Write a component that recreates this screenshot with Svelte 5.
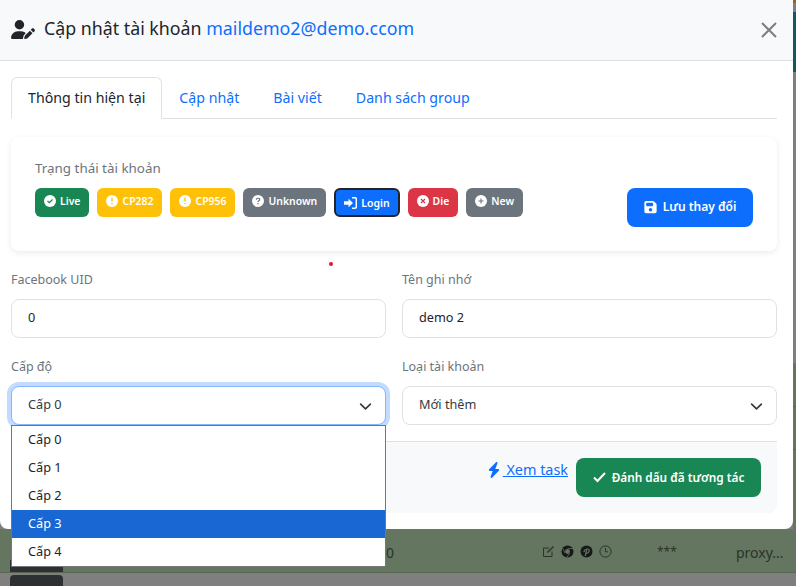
<script>
  const statuses = [
    { label: 'Live', tone: 'green', icon: 'check' },
    { label: 'CP282', tone: 'amber', icon: 'bang' },
    { label: 'CP956', tone: 'amber', icon: 'bang' },
    { label: 'Unknown', tone: 'gray', icon: 'help' },
    { label: 'Login', tone: 'blue', icon: 'login' },
    { label: 'Die', tone: 'red', icon: 'cross' },
    { label: 'New', tone: 'gray', icon: 'plus' }
  ];
  const levels = ['Cấp 0', 'Cấp 1', 'Cấp 2', 'Cấp 3', 'Cấp 4'];
  const tabs = ['Cập nhật', 'Bài viết', 'Danh sách group'];
</script>

<div class="page">
  <div class="edge gold"></div>
  <div class="edge teal"></div>
  <div class="edge green"></div>
  <div class="backdrop-row">
    <span class="cell-num">0</span>
    <span class="row-icons">
      <svg width="13" height="13" viewBox="0 0 13 13" fill="none" stroke="#2b332b" stroke-width="1"><path d="M10 6.500V11.500H1.500V3H7" /><path d="M5.500 7.500L11.500 1.500" stroke-width="1.400" /></svg>
      <svg width="13" height="13" viewBox="0 0 13 13"><circle cx="6.500" cy="6.500" r="6" fill="#15191a" /><circle cx="6.500" cy="6.500" r="2.400" fill="#64765f" /><path d="M6.500 3.600H12M4 8L1.500 3M8.600 8.200L5.800 12.400" stroke="#64765f" stroke-width=".8" /></svg>
      <svg width="13" height="13" viewBox="0 0 13 13"><circle cx="6.500" cy="6.500" r="6" fill="#15191a" /><path d="M5.200 11L6.600 5M4.200 7C3.400 4.500 8.800 2.600 9.200 5.400C9.400 7.600 7 8.800 5.900 7.600" fill="none" stroke="#64765f" stroke-width="1.200" /></svg>
      <svg width="13" height="13" viewBox="0 0 13 13" fill="none" stroke="#2b332b" stroke-width="1"><circle cx="6.500" cy="6.500" r="5.600" /><path d="M6.500 3V6.800H9" /></svg>
    </span>
    <span class="cell-stars">***</span>
    <span class="cell-proxy">proxy...</span>
  </div>
  <div class="backdrop-btn top"></div>
  <div class="backdrop-btn bottom"></div>

  <div class="modal">
    <header class="modal-head">
      <h1>
        <svg class="user-icon" width="24" height="19" viewBox="0 0 640 512" fill="#212529"><path d="M224 256A128 128 0 1 0 224 0a128 128 0 1 0 0 256zm-45.700 48C79.800 304 0 383.800 0 482.300C0 498.700 13.300 512 29.700 512H322.800c-3.100-8.800-3.700-18.400-1.400-27.800l15-60.100c2.800-11.300 8.600-21.500 16.800-29.700l40.300-40.300c-32.100-31-75.700-50.100-123.900-50.100H178.300zm435.500-68.300c-15.600-15.600-40.900-15.600-56.600 0l-29.400 29.400 71 71 29.400-29.400c15.600-15.600 15.600-40.900 0-56.600l-14.400-14.400zM375.900 417c-4.100 4.100-7 9.200-8.400 14.900l-15 60.100c-1.400 5.500 .2 11.200 4.200 15.200s9.700 5.600 15.200 4.200l60.100-15c5.600-1.400 10.800-4.300 14.900-8.400L576.100 358.700l-71-71L375.900 417z" /></svg>
        <span class="title-text">Cập nhật tài khoản <span class="email">maildemo2@demo.ccom</span></span>
      </h1>
      <svg class="close" width="16" height="16" viewBox="0 0 16 16" stroke="#7b7e80" stroke-width="2" fill="none"><path d="M1 1L15 15M15 1L1 15" /></svg>
    </header>

    <div class="modal-body">
      <nav class="tabs">
        <span class="tab active">Thông tin hiện tại</span>
        {#each tabs as tab}
          <span class="tab">{tab}</span>
        {/each}
      </nav>

      <section class="status-card">
        <div class="status-title">Trạng thái tài khoản</div>
        <div class="badges">
          {#each statuses as s}
            <span class="badge {s.tone}">
              {#if s.icon === 'login'}
                <svg width="13" height="12" viewBox="0 0 13 12" fill="#fff"><path d="M0 4.300H4.500V1.800L9 6L4.500 10.200V7.700H0Z" /><path d="M8 .8H11C11.800 .8 12.300 1.300 12.300 2V10C12.300 10.700 11.800 11.200 11 11.200H8" fill="none" stroke="#fff" stroke-width="1.500" /></svg>
              {:else}
                <svg class="raise" width="12" height="12" viewBox="0 0 12 12">
                  <circle cx="6" cy="6" r="6" fill="#fff" />
                  {#if s.icon === 'check'}
                    <path d="M3.500 6L5.300 7.700L8.500 4.500" fill="none" stroke="#198754" stroke-width="1.200" />
                  {:else if s.icon === 'bang'}
                    <path d="M6 2.800V6.700M6 8V9.300" stroke="#ffc107" stroke-width="1.300" />
                  {:else if s.icon === 'help'}
                    <path d="M4.300 4.700C4.400 2.700 7.800 2.800 7.700 4.600C7.600 5.800 6 5.700 6 7M6 8V9.300" fill="none" stroke="#6c757d" stroke-width="1.200" />
                  {:else if s.icon === 'cross'}
                    <path d="M4 4L8 8M8 4L4 8" stroke="#dc3545" stroke-width="1.200" />
                  {:else}
                    <path d="M3.500 6H8.500M6 3.500V8.500" stroke="#6c757d" stroke-width="1.100" />
                  {/if}
                </svg>
              {/if}
              <span class:raise={s.icon !== 'login'}>{s.label}</span>
            </span>
          {/each}
        </div>
        <button class="save" type="button">
          <svg width="13" height="14" viewBox="0 0 448 512" fill="#fff"><path d="M64 32C28.700 32 0 60.700 0 96V416c0 35.300 28.700 64 64 64H384c35.300 0 64-28.700 64-64V173.300c0-17-6.700-33.300-18.700-45.300L352 50.700C340 38.700 323.700 32 306.700 32H64zm0 96c0-17.700 14.300-32 32-32H288c17.700 0 32 14.300 32 32v64c0 17.700-14.300 32-32 32H96c-17.700 0-32-14.300-32-32V128zM224 288a64 64 0 1 1 0 128 64 64 0 1 1 0-128z" /></svg>
          Lưu thay đổi
        </button>
      </section>

      <div class="dot"></div>

      <div class="form-grid">
        <div class="field">
          <label for="uid">Facebook UID</label>
          <input id="uid" value="0" />
        </div>
        <div class="field">
          <label for="memo">Tên ghi nhớ</label>
          <input id="memo" value="demo 2" />
        </div>
        <div class="field">
          <span class="label">Cấp độ</span>
          <div class="select focus">
            Cấp 0
            <svg width="13" height="13" viewBox="0 0 16 16" fill="none" stroke="#343a40" stroke-width="2" stroke-linecap="round" stroke-linejoin="round"><path d="M2 5L8 11L14 5" /></svg>
          </div>
          <ul class="options">
            {#each levels as level, i}
              <li class:picked={i === 3}>{level}</li>
            {/each}
          </ul>
        </div>
        <div class="field">
          <span class="label">Loại tài khoản</span>
          <div class="select">
            Mới thêm
            <svg width="13" height="13" viewBox="0 0 16 16" fill="none" stroke="#343a40" stroke-width="2" stroke-linecap="round" stroke-linejoin="round"><path d="M2 5L8 11L14 5" /></svg>
          </div>
        </div>
      </div>

      <footer class="actions">
        <a class="task-link" href="#task">
          <svg width="12" height="16" viewBox="0 0 448 512" fill="#0d6efd" preserveAspectRatio="none"><path d="M349.400 44.600c5.900-13.700 1.500-29.700-10.600-38.500s-28.600-8-39.900 1.800l-256 224c-10 8.800-13.600 22.900-8.900 35.300S50.700 288 64 288H175.500L98.600 467.400c-5.900 13.700-1.500 29.700 10.600 38.500s28.600 8 39.900-1.800l256-224c10-8.800 13.600-22.900 8.900-35.300s-16.600-20.700-30-20.700H272.500L349.400 44.600z" /></svg>
          <span>&nbsp;Xem task</span>
        </a>
        <button class="mark" type="button">
          <svg width="13" height="12" viewBox="0 0 13 12" fill="none" stroke="#fff" stroke-width="2"><path d="M1 6.500L4.500 10L12 2" /></svg>
          Đánh dấu đã tương tác
        </button>
      </footer>
    </div>
  </div>
</div>

<style>
  :global(body) {
    margin: 0;
    background: #7f7f7f;
  }

  .page {
    position: relative;
    width: 796px;
    height: 586px;
    overflow: hidden;
    background: #7f7f7f;
    font-family: "Noto Sans", sans-serif;
    color: #212529;
  }

  .edge {
    position: absolute;
    left: 793px;
    width: 3px;
  }

  .edge.gold {
    top: 0;
    height: 3px;
    background: #8a6d1c;
  }

  .edge.teal {
    top: 12px;
    height: 60px;
    background: #0f5a5f;
  }

  .edge.green {
    top: 363px;
    height: 166px;
    background: #64765f;
    border-top: 1px solid #6d7a69;
    box-shadow: inset 0 42px 0 #64765f, inset 0 43px 0 #566651, inset 0 85px 0 #64765f, inset 0 86px 0 #566651;
  }

  .backdrop-row {
    position: absolute;
    left: 0;
    right: 0;
    top: 529px;
    height: 44px;
    box-sizing: border-box;
    background: #64765f;
    border-bottom: 1px solid #566651;
    font-size: 14px;
    color: #2b332b;
  }

  .cell-num {
    position: absolute;
    left: 386px;
    top: 14px;
  }

  .row-icons {
    position: absolute;
    left: 542px;
    top: 16px;
    display: flex;
    gap: 6px;
  }

  .cell-stars {
    position: absolute;
    left: 657px;
    top: 14px;
    font-size: 12px;
  }

  .cell-proxy {
    position: absolute;
    left: 736px;
    top: 14px;
  }

  .backdrop-btn {
    position: absolute;
    left: 10px;
    width: 53px;
    background: #2d3033;
  }

  .backdrop-btn.top {
    top: 560px;
    height: 12px;
  }

  .backdrop-btn.bottom {
    top: 575px;
    height: 11px;
    border-radius: 4px 4px 0 0;
  }

  .modal {
    position: absolute;
    left: 0;
    top: 0;
    width: 793px;
    height: 529px;
    background: #fff;
    border-radius: 0 0 8px 8px;
  }

  .modal-head {
    display: flex;
    align-items: center;
    justify-content: space-between;
    height: 60px;
    padding: 0 16px 0 11px;
    background: #f8f9fa;
    border-bottom: 1px solid #dee2e6;
  }

  h1 {
    display: flex;
    align-items: center;
    gap: 9px;
    margin: 0;
    font-size: 17.800px;
    font-weight: 400;
  }

  .user-icon {
    margin-top: -2px;
  }

  .title-text {
    margin-bottom: 4px;
  }

  .email {
    color: #0d6efd;
  }

  .modal-body {
    padding: 16px 16px 0 11px;
  }

  .tabs {
    display: flex;
    height: 42px;
    box-sizing: border-box;
    border-bottom: 1px solid #dee2e6;
    font-size: 14.200px;
  }

  .tab {
    height: 42px;
    box-sizing: border-box;
    padding: 0 16px;
    line-height: 40px;
    color: #0d6efd;
    border: 1px solid transparent;
  }

  .tab.active {
    color: #212529;
    background: #fff;
    border-color: #dee2e6 #dee2e6 #fff;
    border-radius: 6px 6px 0 0;
  }

  .status-card {
    display: grid;
    grid-template-columns: 1fr 126px;
    align-content: start;
    height: 114px;
    box-sizing: border-box;
    margin-top: 18px;
    padding: 22px 24px 0;
    border-radius: 8px;
    background: #fff;
    box-shadow: 0 2px 6px rgba(0, 0, 0, .08);
  }

  .status-title {
    grid-column: 1 / -1;
    font-size: 13.400px;
    line-height: 18px;
    color: #6c757d;
    margin-bottom: 11px;
  }

  .badges {
    display: flex;
    gap: 8px;
  }

  .badge {
    display: flex;
    align-items: center;
    gap: 4px;
    height: 29px;
    box-sizing: border-box;
    padding: 0 9px;
    border-radius: 6px;
    font-size: 10.450px;
    font-weight: 600;
    color: #fff;
  }

  .raise {
    position: relative;
    top: -2px;
  }

  .green { background: #198754; }
  .amber { background: #ffc107; }
  .gray { background: #6c757d; }
  .red { background: #dc3545; }
  .badge.blue {
    background: #0d6efd;
    border: 2px solid #212529;
    padding: 0 8px;
  }

  button {
    display: flex;
    align-items: center;
    justify-content: center;
    gap: 6px;
    height: 39px;
    padding: 0 0 2px;
    border: 0;
    border-radius: 8px;
    color: #fff;
    font-family: inherit;
    font-size: 12px;
    font-weight: 600;
  }

  .save {
    width: 126px;
    background: #0d6efd;
  }

  .dot {
    position: absolute;
    left: 329px;
    top: 262px;
    width: 4px;
    height: 4px;
    border-radius: 50%;
    background: #e0142b;
  }

  .form-grid {
    display: grid;
    grid-template-columns: 375px 375px;
    gap: 20px 16px;
    margin-top: 20px;
  }

  .field {
    position: relative;
  }

  label,
  .label {
    display: block;
    margin-bottom: 10px;
    font-size: 12.500px;
    line-height: 18px;
    color: #6c757d;
  }

  input,
  .select {
    display: flex;
    align-items: center;
    justify-content: space-between;
    width: 100%;
    height: 39px;
    box-sizing: border-box;
    padding: 0 16px 3px;
    border: 1px solid #dee2e6;
    border-radius: 8px;
    background: #fff;
    font-family: inherit;
    font-size: 12.700px;
    color: #212529;
    outline: 0;
  }

  .select {
    padding-right: 13px;
    color: #343a40;
  }

  .select svg {
    margin-top: 4px;
  }

  .select.focus {
    border-color: #86b7fe;
    box-shadow: 0 0 0 4px #c2dbfe;
  }

  .options {
    position: absolute;
    z-index: 2;
    left: 0;
    right: 0;
    top: 67px;
    margin: 0;
    padding: 0;
    list-style: none;
    background: #fff;
    border: 1px solid #767676;
    font-size: 12.700px;
  }

  .options li {
    height: 28px;
    line-height: 27px;
    padding-left: 16px;
  }

  .options li.picked {
    background: #1967d2;
    color: #fff;
  }

  .actions {
    display: flex;
    justify-content: flex-end;
    align-items: flex-start;
    gap: 8px;
    height: 72px;
    box-sizing: border-box;
    margin-top: 16px;
    padding: 16px 16px 0 0;
    background: #f8f9fa;
    border-top: 1px solid #dee2e6;
    border-radius: 0 0 8px 8px;
  }

  .task-link {
    display: flex;
    align-items: center;
    margin-top: 2px;
    color: #0d6efd;
    font-size: 14.400px;
    text-decoration: none;
  }

  .task-link span {
    margin-left: 3px;
    text-decoration: underline;
  }

  .mark {
    width: 185px;
    background: #198754;
    font-size: 11.800px;
  }
</style>
